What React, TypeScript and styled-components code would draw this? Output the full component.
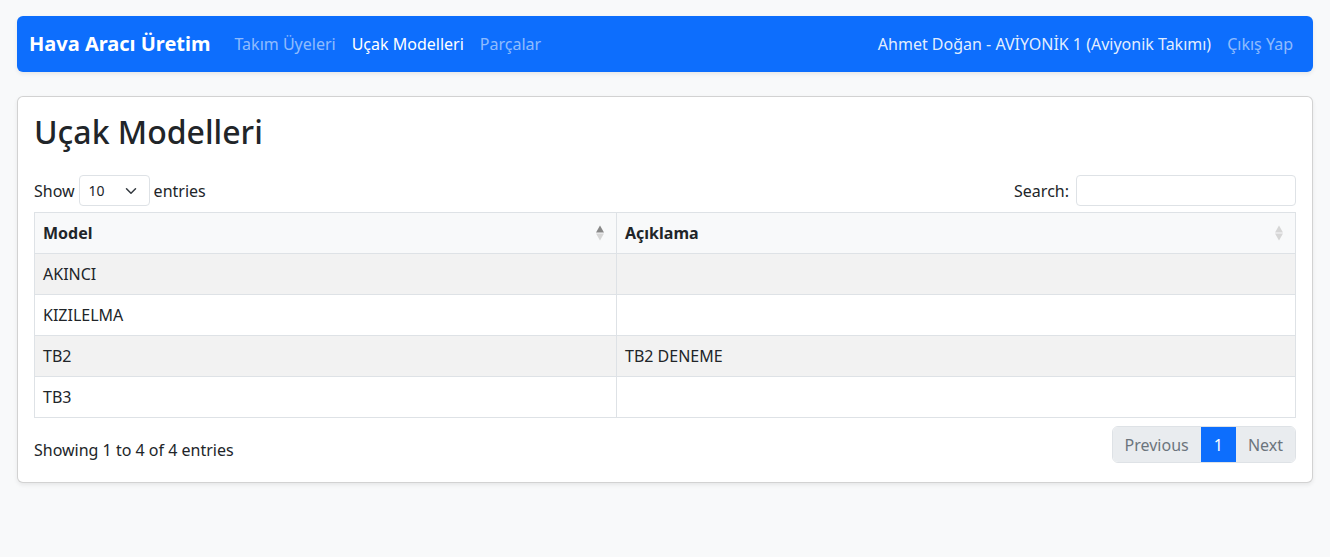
import React from "react";
import styled, { createGlobalStyle } from "styled-components";

const Global = createGlobalStyle`
  * { box-sizing: border-box; }
  body {
    margin: 0;
    background: #f8f9fa;
    color: #212529;
    font-family: "Noto Sans", "Liberation Sans", sans-serif;
    font-size: 16px;
    line-height: 1.5;
  }
`;

const Page = styled.div`
  padding: 16px 17px;
`;

const Navbar = styled.nav`
  display: flex;
  align-items: center;
  justify-content: space-between;
  height: 56px;
  padding: 0 12px 0 12px;
  background: #0d6efd;
  border-radius: 6px;
  box-shadow: 0 0.125rem 0.25rem rgba(0, 0, 0, 0.075);
  margin-bottom: 24px;
`;

const NavGroup = styled.div`
  display: flex;
  align-items: center;
`;

const Brand = styled.a`
  font-size: 20px;
  font-weight: 700;
  color: #fff;
  margin-right: 16px;
  line-height: 30px;
`;

const NavLink = styled.a<{ $active?: boolean }>`
  padding: 8px;
  color: ${(p) => (p.$active ? "#fff" : "rgba(255,255,255,0.55)")};
  text-decoration: none;
  white-space: nowrap;
`;

const NavText = styled.span`
  color: rgba(255, 255, 255, 0.9);
  padding: 8px;
  white-space: nowrap;
`;

const Card = styled.div`
  background: #fff;
  border: 1px solid rgba(0, 0, 0, 0.175);
  border-radius: 6px;
  box-shadow: 0 0.125rem 0.25rem rgba(0, 0, 0, 0.075);
  padding: 16px 16px 19px;
`;

const Title = styled.h2`
  margin: 0 0 24px;
  font-size: 32px;
  font-weight: 500;
  line-height: 1.2;
`;

const TopRow = styled.div`
  display: flex;
  justify-content: space-between;
  align-items: center;
  margin-bottom: 6px;
`;

const Label = styled.label`
  display: flex;
  align-items: center;
  gap: 4px;
  line-height: 22px;
`;

const SelectBox = styled.div`
  display: flex;
  align-items: center;
  justify-content: space-between;
  width: 71px;
  height: 31px;
  padding: 0 12px 0 9px;
  border: 1px solid #dee2e6;
  border-radius: 4px;
  font-size: 14px;
  background: #fff;
`;

const SearchInput = styled.input`
  width: 220px;
  height: 31px;
  margin-left: 3px;
  border: 1px solid #dee2e6;
  border-radius: 4px;
  font: inherit;
  padding: 0 8px;
`;

const Table = styled.table`
  width: 100%;
  border-collapse: collapse;
  border: 1px solid #dee2e6;
`;

const Th = styled.th<{ $w?: string }>`
  position: relative;
  text-align: left;
  font-weight: 700;
  background: #f8f9fa;
  border: 1px solid #dee2e6;
  padding: 8px 26px 8px 8px;
  height: 41px;
  width: ${(p) => p.$w || "auto"};
`;

const Td = styled.td<{ $striped?: boolean }>`
  border: 1px solid #dee2e6;
  padding: 8px;
  height: 40px;
  background: ${(p) => (p.$striped ? "#f2f2f2" : "#fff")};
`;

const SortIcons = styled.span`
  position: absolute;
  right: 12px;
  top: 50%;
  transform: translateY(-50%);
  display: flex;
  flex-direction: column;
  align-items: center;
  gap: 1px;
`;

const Arrow = styled.span<{ $up?: boolean; $dark?: boolean }>`
  width: 0;
  height: 0;
  border-left: 4px solid transparent;
  border-right: 4px solid transparent;
  ${(p) =>
    p.$up
      ? `border-bottom: 7px solid ${p.$dark ? "#888" : "#d6d6d6"};`
      : `border-top: 7px solid ${p.$dark ? "#888" : "#d6d6d6"};`}
`;

const BottomRow = styled.div`
  display: flex;
  justify-content: space-between;
  align-items: flex-start;
  margin-top: 8px;
`;

const Info = styled.span`
  padding-top: 12px;
`;

const Pager = styled.div`
  display: flex;
  border-radius: 6px;
  overflow: hidden;
  border: 1px solid #dee2e6;
`;

const PageBtn = styled.span<{ $active?: boolean }>`
  display: flex;
  align-items: center;
  height: 35px;
  padding: 0 12px;
  background: ${(p) => (p.$active ? "#0d6efd" : "#e9ecef")};
  color: ${(p) => (p.$active ? "#fff" : "#6c757d")};
  & + & {
    border-left: 1px solid ${(p) => (p.$active ? "#0d6efd" : "#dee2e6")};
  }
`;

const rows = [
  ["AKINCI", ""],
  ["KIZILELMA", ""],
  ["TB2", "TB2 DENEME"],
  ["TB3", ""],
];

const Chevron = () => (
  <svg width="12" height="12" viewBox="0 0 16 16" fill="none">
    <path d="M2 5l6 6 6-6" stroke="#343a40" strokeWidth="2" strokeLinecap="round" strokeLinejoin="round" />
  </svg>
);

export default function App() {
  return (
    <>
      <Global />
      <Page>
        <Navbar>
          <NavGroup>
            <Brand>Hava Aracı Üretim</Brand>
            <NavLink>Takım Üyeleri</NavLink>
            <NavLink $active>Uçak Modelleri</NavLink>
            <NavLink>Parçalar</NavLink>
          </NavGroup>
          <NavGroup>
            <NavText>Ahmet Doğan - AVİYONİK 1 (Aviyonik Takımı)</NavText>
            <NavLink>Çıkış Yap</NavLink>
          </NavGroup>
        </Navbar>
        <Card>
          <Title>Uçak Modelleri</Title>
          <TopRow>
            <Label>
              Show
              <SelectBox>
                <span>10</span>
                <Chevron />
              </SelectBox>
              entries
            </Label>
            <Label>
              Search:
              <SearchInput type="search" />
            </Label>
          </TopRow>
          <Table>
            <thead>
              <tr>
                <Th $w="582px">
                  Model
                  <SortIcons>
                    <Arrow $up $dark />
                    <Arrow />
                  </SortIcons>
                </Th>
                <Th>
                  Açıklama
                  <SortIcons>
                    <Arrow $up />
                    <Arrow />
                  </SortIcons>
                </Th>
              </tr>
            </thead>
            <tbody>
              {rows.map((r, i) => (
                <tr key={r[0]}>
                  <Td $striped={i % 2 === 0}>{r[0]}</Td>
                  <Td $striped={i % 2 === 0}>{r[1]}</Td>
                </tr>
              ))}
            </tbody>
          </Table>
          <BottomRow>
            <Info>Showing 1 to 4 of 4 entries</Info>
            <Pager>
              <PageBtn>Previous</PageBtn>
              <PageBtn $active>1</PageBtn>
              <PageBtn>Next</PageBtn>
            </Pager>
          </BottomRow>
        </Card>
      </Page>
    </>
  );
}
